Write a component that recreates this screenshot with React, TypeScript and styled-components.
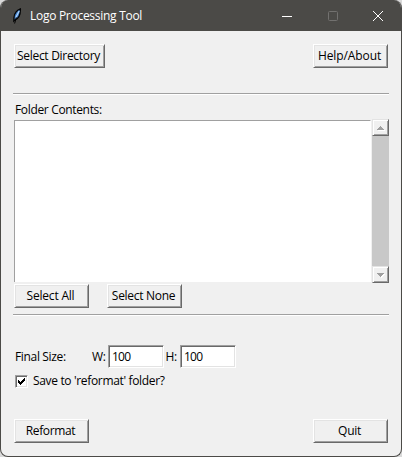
import React, { useState } from 'react';
import styled, { createGlobalStyle } from 'styled-components';

const GlobalStyle = createGlobalStyle`
  * { box-sizing: border-box; }
  body {
    margin: 0;
    background: #d9d9d9;
    font: 12px/16px "Open Sans", "Noto Sans", sans-serif;
    color: #000;
  }
`;

const Window = styled.div`
  width: 402px;
  height: 457px;
  display: flex;
  flex-direction: column;
  overflow: hidden;
  border: 1px solid #4b4a47;
  border-top: 0;
  border-radius: 8px;
  background: #f0f0f0;
`;

const TitleBar = styled.header`
  height: 31px;
  flex: none;
  display: flex;
  align-items: center;
  padding-left: 10px;
  background: #4b4a47;
  color: #fff;
`;

const Text = styled.span<{ $track?: number }>`
  white-space: nowrap;
  letter-spacing: ${p => p.$track ?? -0.34}px;
`;

const Title = styled(Text)`
  flex: 1;
  margin-left: 7px;
`;

const Caption = styled.div`
  width: 45.5px;
  height: 31px;
  display: flex;
  align-items: center;
  justify-content: center;
`;

const Content = styled.main`
  flex: 1;
  display: flex;
  flex-direction: column;
  padding: 13px 12px 0;
`;

const Row = styled.div<{ $top?: number; $gap?: number; $spread?: boolean }>`
  display: flex;
  align-items: center;
  justify-content: ${p => (p.$spread ? 'space-between' : 'flex-start')};
  gap: ${p => p.$gap ?? 0}px;
  margin-top: ${p => p.$top ?? 0}px;
  padding: 0 1px;
`;

const Button = styled.button<{ $width?: number; $track?: number }>`
  width: ${p => p.$width ?? 75}px;
  height: 24px;
  flex: none;
  padding: 0 2px 1px 0;
  border: 1px solid;
  border-color: #fff #696969 #696969 #fff;
  box-shadow: inset 1px 1px #e3e3e3, inset -1px -1px #a0a0a0;
  background: #f0f0f0;
  color: inherit;
  font: inherit;
  letter-spacing: ${p => p.$track ?? -0.3}px;
  white-space: nowrap;
`;

const Separator = styled.div<{ $top: number }>`
  height: 2px;
  flex: none;
  margin-top: ${p => p.$top}px;
  border-top: 1px solid #a0a0a0;
  border-bottom: 1px solid #fff;
`;

const FolderLabel = styled(Text)`
  margin: 7px 0 0 2px;
`;

const ListRow = styled.div`
  display: flex;
  align-items: center;
  justify-content: space-between;
  height: 164px;
  padding-left: 1px;
  margin-top: 1px;
`;

const ListBox = styled.div`
  width: 357px;
  height: 162px;
  border-left: 1px solid #a0a0a0;
  border-top: 1px solid #a0a0a0;
  border-right: 1px solid #fff;
  background: #fff;
`;

const ScrollBar = styled.div`
  width: 17px;
  height: 164px;
  display: flex;
  flex-direction: column;
  justify-content: space-between;
  background: #c8c8c8;
`;

const ScrollButton = styled.div`
  width: 17px;
  height: 17px;
  display: flex;
  align-items: center;
  justify-content: center;
  border: 1px solid;
  border-color: #e3e3e3 #696969 #696969 #e3e3e3;
  box-shadow: inset 1px 1px #fff, inset -1px -1px #a0a0a0;
  background: #f0f0f0;
`;

const Field = styled.input`
  width: 56px;
  height: 23px;
  padding: 0 0 0 3px;
  border: 1px solid;
  border-color: #a0a0a0 #fff #fff #a0a0a0;
  box-shadow: inset 1px 1px #696969, inset -1px -1px #e3e3e3;
  background: #fff;
  color: #000;
  font: inherit;
  letter-spacing: -0.75px;
  outline: none;
`;

const SizeLabel = styled(Text)<{ $width: number; $indent?: number }>`
  width: ${p => p.$width}px;
  padding-left: ${p => p.$indent ?? 0}px;
  flex: none;
`;

const SizeRow = styled(Row)`
  padding-left: 2px;
`;

const CheckLabel = styled.label`
  display: flex;
  align-items: center;
  gap: 5px;
  height: 16px;
  margin: 5px 0 0 2px;
`;

const CheckInput = styled.input`
  appearance: none;
  position: absolute;
  margin: 0;
`;

const CheckBox = styled.span`
  width: 13px;
  height: 13px;
  display: flex;
  border: 1px solid;
  border-color: #a0a0a0 #fff #fff #a0a0a0;
  box-shadow: inset 1px 1px #696969, inset -1px -1px #e3e3e3;
  background: #fff;
`;

const Feather = () => (
  <svg width="12" height="16" viewBox="0 0 12 16">
    <path d="M9.4 0.8 C6.3 1.8 3.2 5.3 3 9.2 L2.8 13 L4 12 C7.2 10.6 9.6 6.3 9.4 0.8Z" fill="#3f7cc4" stroke="#050505" strokeWidth="1.3" />
    <path d="M8.2 3 L4.8 9.5" stroke="#b4d8ff" strokeWidth="1.2" />
    <path d="M5.4 9.5 L3.6 15.5" stroke="#050505" strokeWidth="1" />
  </svg>
);

const Arrow = ({ down = false }: { down?: boolean }) => (
  <svg width="9" height="6" viewBox="0 0 9 6" shapeRendering="crispEdges">
    {down ? (
      <>
        <path d="M2 2h7v1h-1v1h-1v1h-1v1h-1v-1h-1v-1h-1v-1h-1z" fill="#fff" />
        <path d="M1 1h7v1h-1v1h-1v1h-1v1h-1v-1h-1v-1h-1v-1h-1z" fill="#a0a0a0" />
      </>
    ) : (
      <>
        <path d="M5 2h1v1h1v1h1v1h1v1h-7v-1h1v-1h1v-1h1z" fill="#fff" />
        <path d="M4 1h1v1h1v1h1v1h1v1h-7v-1h1v-1h1v-1h1z" fill="#a0a0a0" />
      </>
    )}
  </svg>
);

export default function App() {
  const [width, setWidth] = useState('100');
  const [height, setHeight] = useState('100');
  const [save, setSave] = useState(true);

  return (
    <>
      <GlobalStyle />
      <Window>
        <TitleBar>
          <Feather />
          <Title $track={-0.28}>Logo Processing Tool</Title>
          <Caption>
            <svg width="10" height="10"><path d="M0 5.5h10" stroke="#fff" /></svg>
          </Caption>
          <Caption>
            <svg width="10" height="10"><rect x=".5" y=".5" width="9" height="9" rx="1" fill="none" stroke="#72716f" /></svg>
          </Caption>
          <Caption>
            <svg width="10" height="10"><path d="M0 0L10 10M10 0L0 10" stroke="#fff" /></svg>
          </Caption>
        </TitleBar>
        <Content>
          <Row $spread>
            <Button $width={91}>Select Directory</Button>
            <Button $track={-0.1}>Help/About</Button>
          </Row>
          <Separator $top={25} />
          <FolderLabel>Folder Contents:</FolderLabel>
          <ListRow>
            <ListBox />
            <ScrollBar>
              <ScrollButton><Arrow /></ScrollButton>
              <ScrollButton><Arrow down /></ScrollButton>
            </ScrollBar>
          </ListRow>
          <Row $top={1} $gap={18}>
            <Button $track={-0.2}>Select All</Button>
            <Button>Select None</Button>
          </Row>
          <Separator $top={6} />
          <SizeRow $top={29}>
            <SizeLabel $width={77}>Final Size:</SizeLabel>
            <SizeLabel $width={16}>W:</SizeLabel>
            <Field value={width} onChange={e => setWidth(e.target.value)} />
            <SizeLabel $width={16} $indent={1.5}>H:</SizeLabel>
            <Field value={height} onChange={e => setHeight(e.target.value)} />
          </SizeRow>
          <CheckLabel>
            <CheckInput type="checkbox" checked={save} onChange={e => setSave(e.target.checked)} />
            <CheckBox>
              {save && (
                <svg width="11" height="11" shapeRendering="crispEdges">
                  <path d="M2 4h1v1h1v1h1v-1h1v-1h1v-1h1v-1h1v3h-1v1h-1v1h-1v1h-1v1h-1v-1h-1v-1h-1z" />
                </svg>
              )}
            </CheckBox>
            <Text>Save to 'reformat' folder?</Text>
          </CheckLabel>
          <Row $top={30} $spread>
            <Button $track={-0.35}>Reformat</Button>
            <Button>Quit</Button>
          </Row>
        </Content>
      </Window>
    </>
  );
}
